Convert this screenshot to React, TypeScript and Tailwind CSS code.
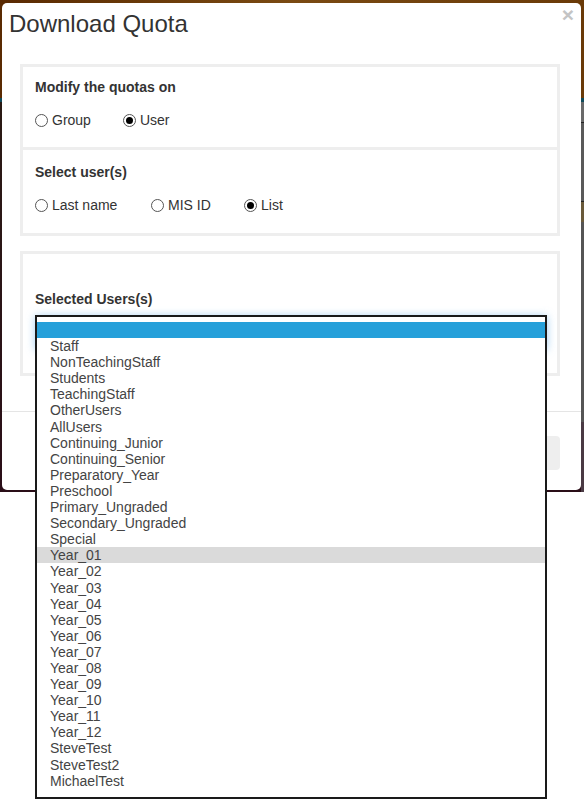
import React from 'react';

const options = [
  '',
  'Staff',
  'NonTeachingStaff',
  'Students',
  'TeachingStaff',
  'OtherUsers',
  'AllUsers',
  'Continuing_Junior',
  'Continuing_Senior',
  'Preparatory_Year',
  'Preschool',
  'Primary_Ungraded',
  'Secondary_Ungraded',
  'Special',
  'Year_01',
  'Year_02',
  'Year_03',
  'Year_04',
  'Year_05',
  'Year_06',
  'Year_07',
  'Year_08',
  'Year_09',
  'Year_10',
  'Year_11',
  'Year_12',
  'SteveTest',
  'SteveTest2',
  'MichaelTest',
];

function Radio({ label, checked }: { label: string; checked?: boolean }) {
  return (
    <span className="flex items-center gap-[4px]">
      <span className="flex h-[13px] w-[13px] items-center justify-center rounded-full border border-[#555] bg-white">
        {checked && <span className="h-[7px] w-[7px] rounded-full bg-black" />}
      </span>
      <span className="text-[14px] leading-[16px] text-[#333]">{label}</span>
    </span>
  );
}

export default function App() {
  return (
    <div className="relative h-[799px] w-[584px] overflow-hidden bg-white font-['Liberation_Sans',Arial,sans-serif]">
      {/* dimmed page behind the modal */}
      <div className="flex h-[492px] flex-col">
        <div className="h-[98px] bg-gradient-to-r from-[#5a2a02] via-[#7a4a12] to-[#6a3a08]" />
        <div className="h-[4px] bg-[#0e4a5a]" />
        <div className="flex-1 bg-gradient-to-b from-[#2a1a14] to-[#2a0e18]" />
      </div>

      {/* modal */}
      <div className="absolute left-[2px] top-[3px] flex h-[487px] w-[579px] flex-col rounded-[5px] bg-white">
        <div className="relative h-[58px] px-[7px] pt-[6px]">
          <h1 className="text-[24px] leading-[29px] text-[#333]">Download Quota</h1>
          <span className="absolute right-[7px] top-[1px] text-[21px] font-bold leading-[21px] text-[#c4c4c4]">×</span>
        </div>

        <div className="ml-[18px] mt-[3px] w-[540px]">
          <div className="h-[86px] border-[3px] border-[#eeeeee] px-[12px] pt-[12px]">
            <div className="text-[14px] font-bold leading-[16px] text-[#333]">Modify the quotas on</div>
            <div className="mt-[17px] flex gap-[32px]">
              <Radio label="Group" />
              <Radio label="User" checked />
            </div>
          </div>
          <div className="h-[86px] border-[3px] border-t-0 border-[#eeeeee] px-[12px] pt-[14px]">
            <div className="text-[14px] font-bold leading-[16px] text-[#333]">Select user(s)</div>
            <div className="mt-[17px] flex">
              <span className="w-[116px]"><Radio label="Last name" /></span>
              <span className="w-[93px]"><Radio label="MIS ID" /></span>
              <Radio label="List" checked />
            </div>
          </div>

          <div className="mt-[15px] h-[125px] border-[3px] border-[#eeeeee] px-[12px] pt-[37px]">
            <div className="text-[14px] font-bold leading-[16px] text-[#333]">Selected Users(s)</div>
            <div className="mt-[9px] h-[34px] w-[512px] rounded-[2px] border border-[#66afe9] shadow-[0_0_8px_rgba(102,175,233,0.6)]" />
          </div>
        </div>

        <div className="mt-[35px] border-t border-[#e5e5e5]" />
        <div className="flex justify-end pr-[21px] pt-[24px]">
          <div className="h-[34px] w-[100px] rounded-[4px] bg-[#eeeeee]" />
        </div>
      </div>

      {/* page edge showing on the right */}
      <div className="absolute left-[581px] top-[102px] flex h-[390px] w-[3px] flex-col">
        <div className="h-[20px] bg-[#6a6a6a]" />
        <div className="h-[1px] bg-[#222]" />
        <div className="h-[78px] bg-[#5a5a5a]" />
        <div className="h-[1px] bg-[#222]" />
        <div className="h-[20px] bg-[#6a5a3a]" />
        <div className="h-[200px] bg-[#555]" />
        <div className="flex-1 bg-[#4a3a44]" />
      </div>

      {/* open list of the select */}
      <div className="absolute left-[35px] top-[315px] h-[484px] w-[512px] border-2 border-[#1a1a1a] bg-white pt-[5px]">
        {options.map((o, i) => (
          <div
            key={i}
            className={`h-[16.1px] pl-[13px] text-[14px] leading-[16px] text-[#444] ${
              i === 0 ? 'bg-[#26a0da]' : i === 14 ? 'bg-[#dadada]' : ''
            }`}
          >
            {o}
          </div>
        ))}
      </div>
    </div>
  );
}
